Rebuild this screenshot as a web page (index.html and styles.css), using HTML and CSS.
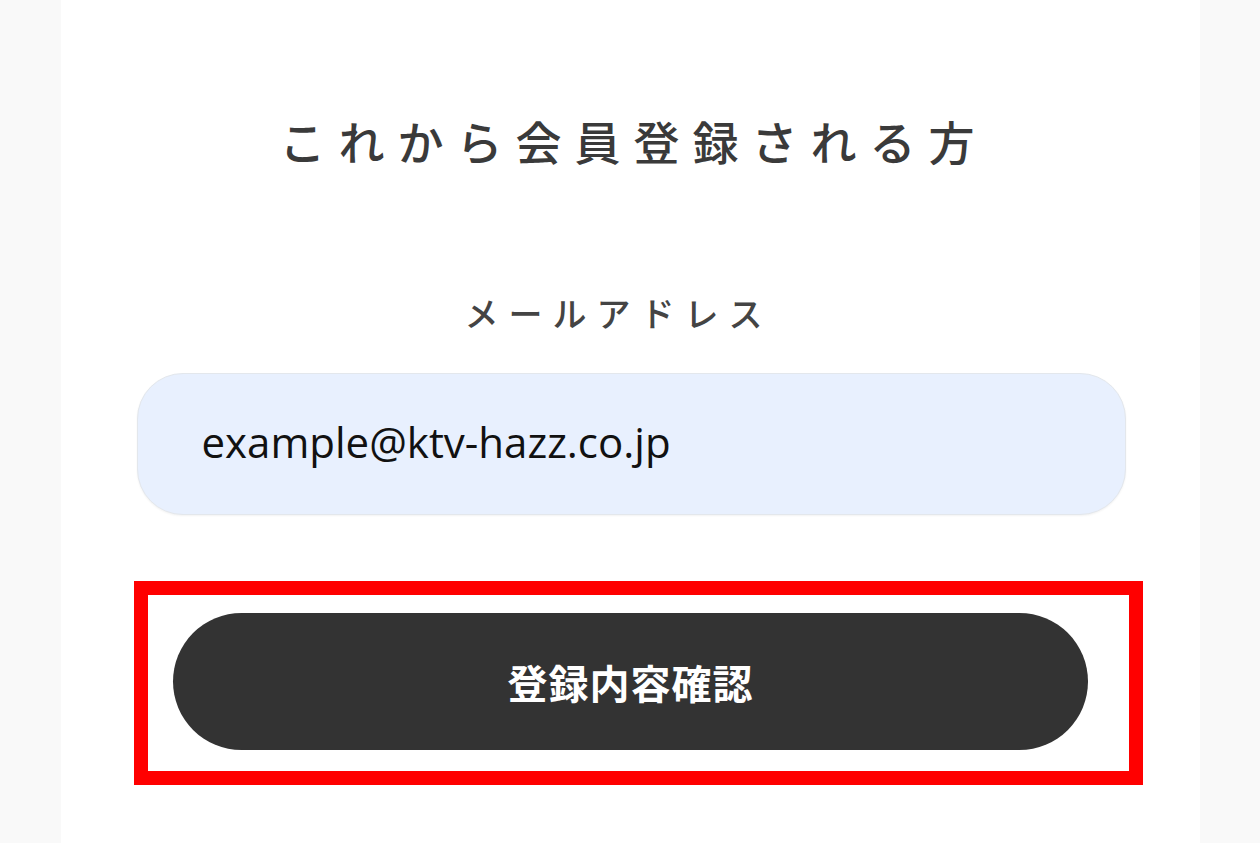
FILE: index.html
```html
<!DOCTYPE html>
<html lang="ja">
<head>
<meta charset="utf-8">
<title>会員登録</title>
<link rel="stylesheet" href="styles.css">
</head>
<body>
<main class="panel">
  <h1 class="title">これから会員登録される方</h1>
  <label class="label" for="email">メールアドレス</label>
  <div class="field">
    <input id="email" class="input" type="email" value="example@ktv-hazz.co.jp">
  </div>
  <div class="action">
    <button class="btn" type="button">登録内容確認</button>
    <div class="highlight"></div>
  </div>
</main>
</body>
</html>
```

FILE: styles.css
```css
html, body {
  margin: 0;
  padding: 0;
  background: #f9f9f9;
  height: 843px;
  overflow: hidden;
}

.panel {
  position: relative;
  width: 1139px;
  height: 843px;
  margin-left: 61px;
  background: #ffffff;
  display: flex;
  flex-direction: column;
  align-items: center;
  font-family: "Noto Sans CJK JP", "Noto Sans", sans-serif;
  color: #333;
}

.title {
  margin: 110px 0 0 0;
  height: 60px;
  line-height: 60px;
  font-size: 46px;
  font-weight: 500;
  letter-spacing: 13px;
  text-indent: 6px;
  color: #3a3a3a;
}

.label {
  display: block;
  margin-top: 123px;
  margin-right: 34px;
  height: 40px;
  line-height: 40px;
  font-size: 34px;
  font-weight: 500;
  letter-spacing: 10px;
  text-indent: 10px;
  color: #444;
}

.field {
  margin-top: 40px;
  margin-left: 1px;
}

.input {
  box-sizing: border-box;
  width: 989px;
  height: 142px;
  border: 1px solid #e3e7ec;
  border-radius: 46px;
  background: #e8f0fe;
  padding: 0 0 6px 64px;
  font-family: "Open Sans", "Lato", sans-serif;
  font-size: 42px;
  color: #111;
  outline: none;
  box-shadow: 0 1px 2px rgba(0,0,0,0.05);
}

.action {
  position: relative;
  margin-top: 98px;
}

.btn {
  display: block;
  width: 915px;
  height: 137px;
  border: none;
  border-radius: 69px;
  background: #333333;
  color: #fff;
  font-family: "Noto Sans CJK JP", sans-serif;
  font-size: 40px;
  font-weight: 700;
  letter-spacing: 1px;
}

.highlight {
  position: absolute;
  left: -39px;
  top: -32px;
  width: 981px;
  height: 176px;
  border: 14px solid #ff0000;
  pointer-events: none;
}
```
